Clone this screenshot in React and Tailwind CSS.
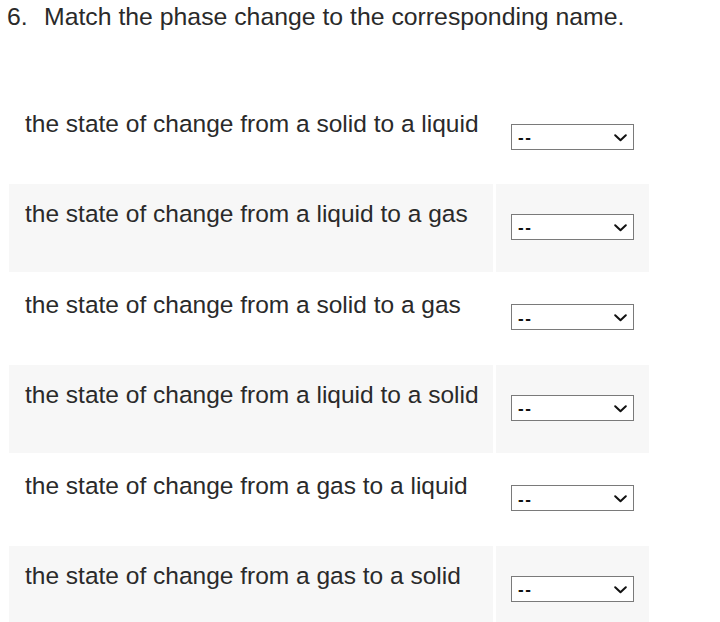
const rows = [
  "the state of change from a solid to a liquid",
  "the state of change from a liquid to a gas",
  "the state of change from a solid to a gas",
  "the state of change from a liquid to a solid",
  "the state of change from a gas to a liquid",
  "the state of change from a gas to a solid",
];

const Chevron = () => (
  <svg className="pointer-events-none absolute right-[7px] top-[10px]" width="13" height="8" viewBox="0 0 13 8" fill="none">
    <path d="M1.2 1.2 L6.5 6.3 L11.8 1.2" stroke="#111" strokeWidth="2" strokeLinecap="round" strokeLinejoin="round" />
  </svg>
);

const Dropdown = () => (
  <div className="relative w-[123px] h-[26px]">
    <select
      defaultValue=""
      className="appearance-none w-full h-full bg-white border border-[#7a7a7a] pl-[6px] pt-[2px] text-[17px] font-bold text-[#111] leading-none outline-none tracking-[1.5px]"
      style={{ fontFamily: "'Liberation Sans', Arial, sans-serif" }}
    >
      <option value="">--</option>
      <option value="melting">melting</option>
      <option value="evaporation">evaporation</option>
      <option value="sublimation">sublimation</option>
      <option value="freezing">freezing</option>
      <option value="condensation">condensation</option>
      <option value="deposition">deposition</option>
    </select>
    <Chevron />
  </div>
);

export default function App() {
  return (
    <div className="w-[720px] h-[622px] overflow-hidden bg-white text-[#2a2a2a]" style={{ fontFamily: "'Liberation Sans', Arial, sans-serif" }}>
      <div className="flex pl-[7px] pt-[3px] text-[24.8px] leading-[28px]">
        <span className="w-[37px]">6.</span>
        <span>Match the phase change to the corresponding name.</span>
      </div>
      <div className="flex flex-col gap-y-[2.4px] pl-[9px] pt-[62.6px]">
        {rows.map((text, i) => (
          <div key={i} className="flex gap-x-[3px] h-[88px]">
            <div className={`w-[484px] pl-[16px] pt-[16.5px] text-[24.5px] leading-[28px] ${i % 2 ? "bg-[#f7f7f7]" : "bg-white"}`}>
              {text}
            </div>
            <div className={`w-[153px] pl-[15px] pt-[30px] ${i % 2 ? "bg-[#f7f7f7]" : "bg-white"}`}>
              <Dropdown />
            </div>
          </div>
        ))}
      </div>
    </div>
  );
}
